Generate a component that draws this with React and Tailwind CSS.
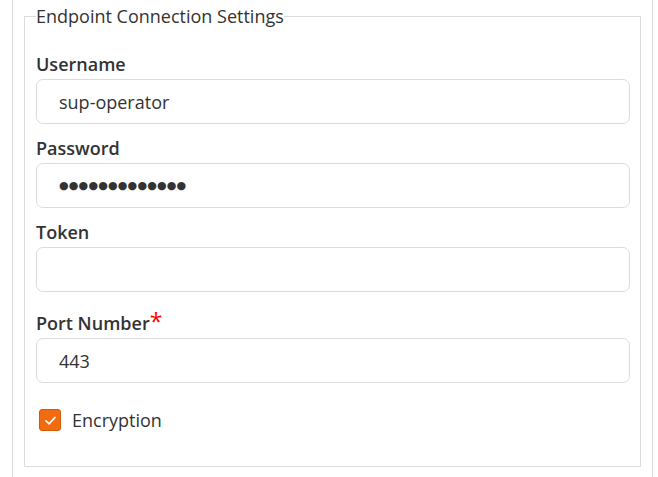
import React from 'react';

const fieldInput =
  'block w-full h-[45px] mt-[3px] px-[22px] rounded-[7px] border border-[#dcdcdc] bg-white text-[#333] outline-none';

function Field({ label, required, value, inputClass = 'text-[18px]', className = '' }) {
  return (
    <div className={className}>
      <label className="block text-[18px] leading-[24px] font-semibold text-[#333]">
        {label}
        {required && (
          <span className="text-[23px] leading-none text-[#ff0000] font-normal">*</span>
        )}
      </label>
      <input className={`${fieldInput} ${inputClass}`} type="text" value={value} readOnly />
    </div>
  );
}

export default function App() {
  return (
    <div className="w-[658px] h-[477px] bg-white pl-3 pr-[5px] font-['Open_Sans',sans-serif]">
      <div className="h-full border-x border-[#dcdcdc] pl-[11px] pr-[11px] pt-[4px]">
        <fieldset className="border border-[#dcdcdc] pl-[11px] pr-[10px] pb-[33px] pt-[24px]">
          <legend className="text-[18px] leading-[24px] text-[#333]">Endpoint Connection Settings</legend>

          <Field label="Username" value="sup-operator" />
          <Field
            label="Password"
            value="●●●●●●●●●●●●●"
            inputClass="text-[11px] tracking-[0.2px] font-['DejaVu_Sans',sans-serif] text-[#222]"
            className="mt-[12px]"
          />
          <Field label="Token" value="" className="mt-[12px]" />
          <Field label="Port Number" required value="443" className="mt-[18px]" />

          <div className="flex items-center h-[26px] mt-[24px]">
            <span className="ml-[3px] flex items-center justify-center w-[22px] h-[22px] rounded-[3px] bg-[#f26b10] border border-[#d65a06]">
              <svg width="13" height="13" viewBox="0 0 13 13" fill="none">
                <polyline points="2,6.8 5.2,9.8 11,3.4" stroke="white" strokeWidth="1.7" strokeLinecap="round" strokeLinejoin="round" />
              </svg>
            </span>
            <span className="ml-[11px] text-[18px] text-[#333]">Encryption</span>
          </div>
        </fieldset>
      </div>
    </div>
  );
}
